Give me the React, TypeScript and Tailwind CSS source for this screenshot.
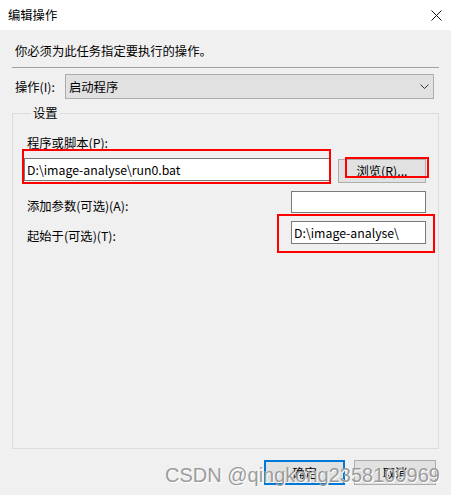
const ui = { fontFamily: '"Noto Sans CJK SC", "Noto Sans", sans-serif' };

function Chevron() {
  return (
    <svg width="9" height="5" viewBox="0 0 9 5" fill="none">
      <path d="M0.5 0.5 L4.5 4.5 L8.5 0.5" stroke="#333" strokeWidth="1" />
    </svg>
  );
}

function TextBox({ value, className }: { value?: string; className: string }) {
  return (
    <div
      className={`bg-white border border-[#7a7a7a] flex items-center pl-[2px] leading-[16px] ${className}`}
    >
      {value}
    </div>
  );
}

export default function App() {
  return (
    <div
      className="w-[451px] h-[495px] bg-[#f0f0f0] flex flex-col relative overflow-hidden text-[12.3px] text-black"
      style={ui}
    >
      <div className="h-[30px] bg-white flex items-center justify-between pl-[8px] pr-[9px]">
        <span className="leading-[16px]">编辑操作</span>
        <svg width="11" height="11" viewBox="0 0 11 11" fill="none">
          <path d="M0.5 0.5 L10.5 10.5 M10.5 0.5 L0.5 10.5" stroke="#111" strokeWidth="1" />
        </svg>
      </div>

      <div className="px-[12px]">
        <p className="pl-[3px] mt-[13px] leading-[16px]">你必须为此任务指定要执行的操作。</p>
        <div className="mt-[8px] h-px bg-[#a0a0a0]" />

        <div className="mt-[6px] flex items-center h-[25px]">
          <span className="pl-[3px] w-[53px] leading-[16px]">操作(I):</span>
          <div className="w-[369px] h-[25px] border border-[#adadad] bg-[#e1e1e1] flex items-center justify-between pl-[3px] pr-[4px] leading-[16px]">
            <span>启动程序</span>
            <Chevron />
          </div>
        </div>

        <fieldset className="mt-[6px] h-[344px] border border-[#dcdcdc] pl-[11px] pr-[12px]">
          <legend className="ml-[7px] px-[2px] leading-[16px]">设置</legend>

          <p className="pl-[3px] mt-[14px] leading-[16px]">程序或脚本(P):</p>
          <div className="mt-[7px] flex items-start">
            <TextBox value="D:\image-analyse\run0.bat" className="w-[306px] h-[23px]" />
            <button className="ml-[8px] mt-[1px] w-[88px] h-[24px] border border-[#adadad] bg-[#e1e1e1] leading-[16px]">
              浏览(R)...
            </button>
          </div>

          <div className="mt-[8px] flex items-start justify-between">
            <span className="pl-[3px] mt-[7px] leading-[16px]">添加参数(可选)(A):</span>
            <TextBox className="w-[135px] h-[22px]" />
          </div>

          <div className="mt-[7px] flex items-start justify-between">
            <span className="pl-[3px] mt-[7px] leading-[16px]">起始于(可选)(T):</span>
            <TextBox value="D:\image-analyse\" className="w-[135px] h-[23px]" />
          </div>
        </fieldset>

        <div className="mt-[11px] flex justify-end gap-[9px] pr-[3px]">
          <button className="w-[81px] h-[25px] border-2 border-[#0078d7] bg-[#e1e1e1] leading-[16px]">
            确定
          </button>
          <button className="w-[82px] h-[25px] border border-[#adadad] bg-[#e1e1e1] leading-[16px]">
            取消
          </button>
        </div>
      </div>

      {/* annotation boxes */}
      <div className="absolute left-[22px] top-[149px] w-[309px] h-[35px] border-2 border-[#ff0000]" />
      <div className="absolute left-[345px] top-[157px] w-[84px] h-[21px] border-2 border-[#ff0000]" />
      <div className="absolute left-[277px] top-[214px] w-[158px] h-[39px] border-2 border-[#ff0000]" />

      <div
        className="absolute left-[165px] top-[465px] text-[20px] leading-[20px] text-[#9c9c9c] whitespace-nowrap [text-shadow:1px_1px_0_#ffffff]"
        style={{ fontFamily: '"Liberation Sans", Arial, sans-serif' }}
      >
        CSDN @qingkong2358109969
      </div>
    </div>
  );
}
